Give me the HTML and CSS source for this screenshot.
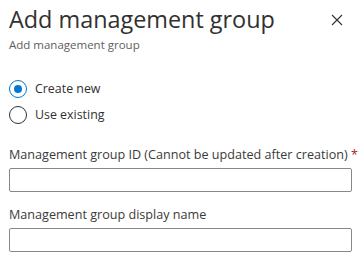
FILE: index.html
```html
<!DOCTYPE html>
<html lang="en">
<head>
  <meta charset="UTF-8">
  <title>Add management group</title>
  <link rel="stylesheet" href="styles.css">
</head>
<body>
  <div class="panel">
    <header class="panel-header">
      <div class="titles">
        <h1>Add management group</h1>
        <div class="subtitle">Add management group</div>
      </div>
      <button class="close" aria-label="Close">
        <svg width="12" height="12" viewBox="0 0 12 12">
          <path d="M1 1 L11 11 M11 1 L1 11" stroke="#323130" stroke-width="1.1" fill="none"/>
        </svg>
      </button>
    </header>

    <div class="radios">
      <label class="radio checked"><span class="dot"></span>Create new</label>
      <label class="radio"><span class="dot"></span>Use existing</label>
    </div>

    <div class="field first">
      <label class="field-label">Management group ID (Cannot be updated after creation) <span class="req">*</span></label>
      <input type="text" class="text-input">
    </div>
    <div class="field">
      <label class="field-label">Management group display name</label>
      <input type="text" class="text-input">
    </div>
  </div>
</body>
</html>
```

FILE: styles.css
```css
body {
  margin: 0;
  background: #fff;
  font-family: 'Open Sans', sans-serif;
  color: #323130;
}
.panel {
  padding: 0 12px 0 9px;
}
.panel-header {
  display: flex;
  justify-content: space-between;
  align-items: flex-start;
}
h1 {
  margin: 0;
  font-size: 23.4px;
  font-weight: 400;
  line-height: 38px;
  color: #323130;
}
.subtitle {
  font-size: 11.5px;
  line-height: 14px;
  color: #605e5c;
}
.close {
  border: none;
  background: none;
  padding: 0;
  margin: 14px 9px 0 0;
  width: 12px;
  height: 12px;
  display: flex;
}
.radios {
  margin-top: 28px;
  display: flex;
  flex-direction: column;
  gap: 8px;
}
.radio {
  display: flex;
  align-items: center;
  gap: 8px;
  font-size: 12.4px;
  line-height: 18px;
  color: #323130;
}
.dot {
  width: 16px;
  height: 16px;
  border: 1px solid #323130;
  border-radius: 50%;
  box-sizing: content-box;
  position: relative;
}
.radio.checked .dot {
  border-color: #0078d4;
}
.radio.checked .dot::after {
  content: "";
  position: absolute;
  left: 4px;
  top: 4px;
  width: 8px;
  height: 8px;
  border-radius: 50%;
  background: #0078d4;
}
.field {
  margin-top: 14px;
}
.field.first {
  margin-top: 22px;
}
.field-label {
  display: block;
  font-size: 12.6px;
  line-height: 18px;
  white-space: nowrap;
  color: #3b3a39;
  margin-bottom: 4px;
}
.req {
  color: #a4262c;
}
.text-input {
  display: block;
  width: 100%;
  height: 24px;
  box-sizing: border-box;
  border: 1px solid #8a8886;
  border-radius: 2px;
  margin: 0;
  padding: 0 8px;
}
```
